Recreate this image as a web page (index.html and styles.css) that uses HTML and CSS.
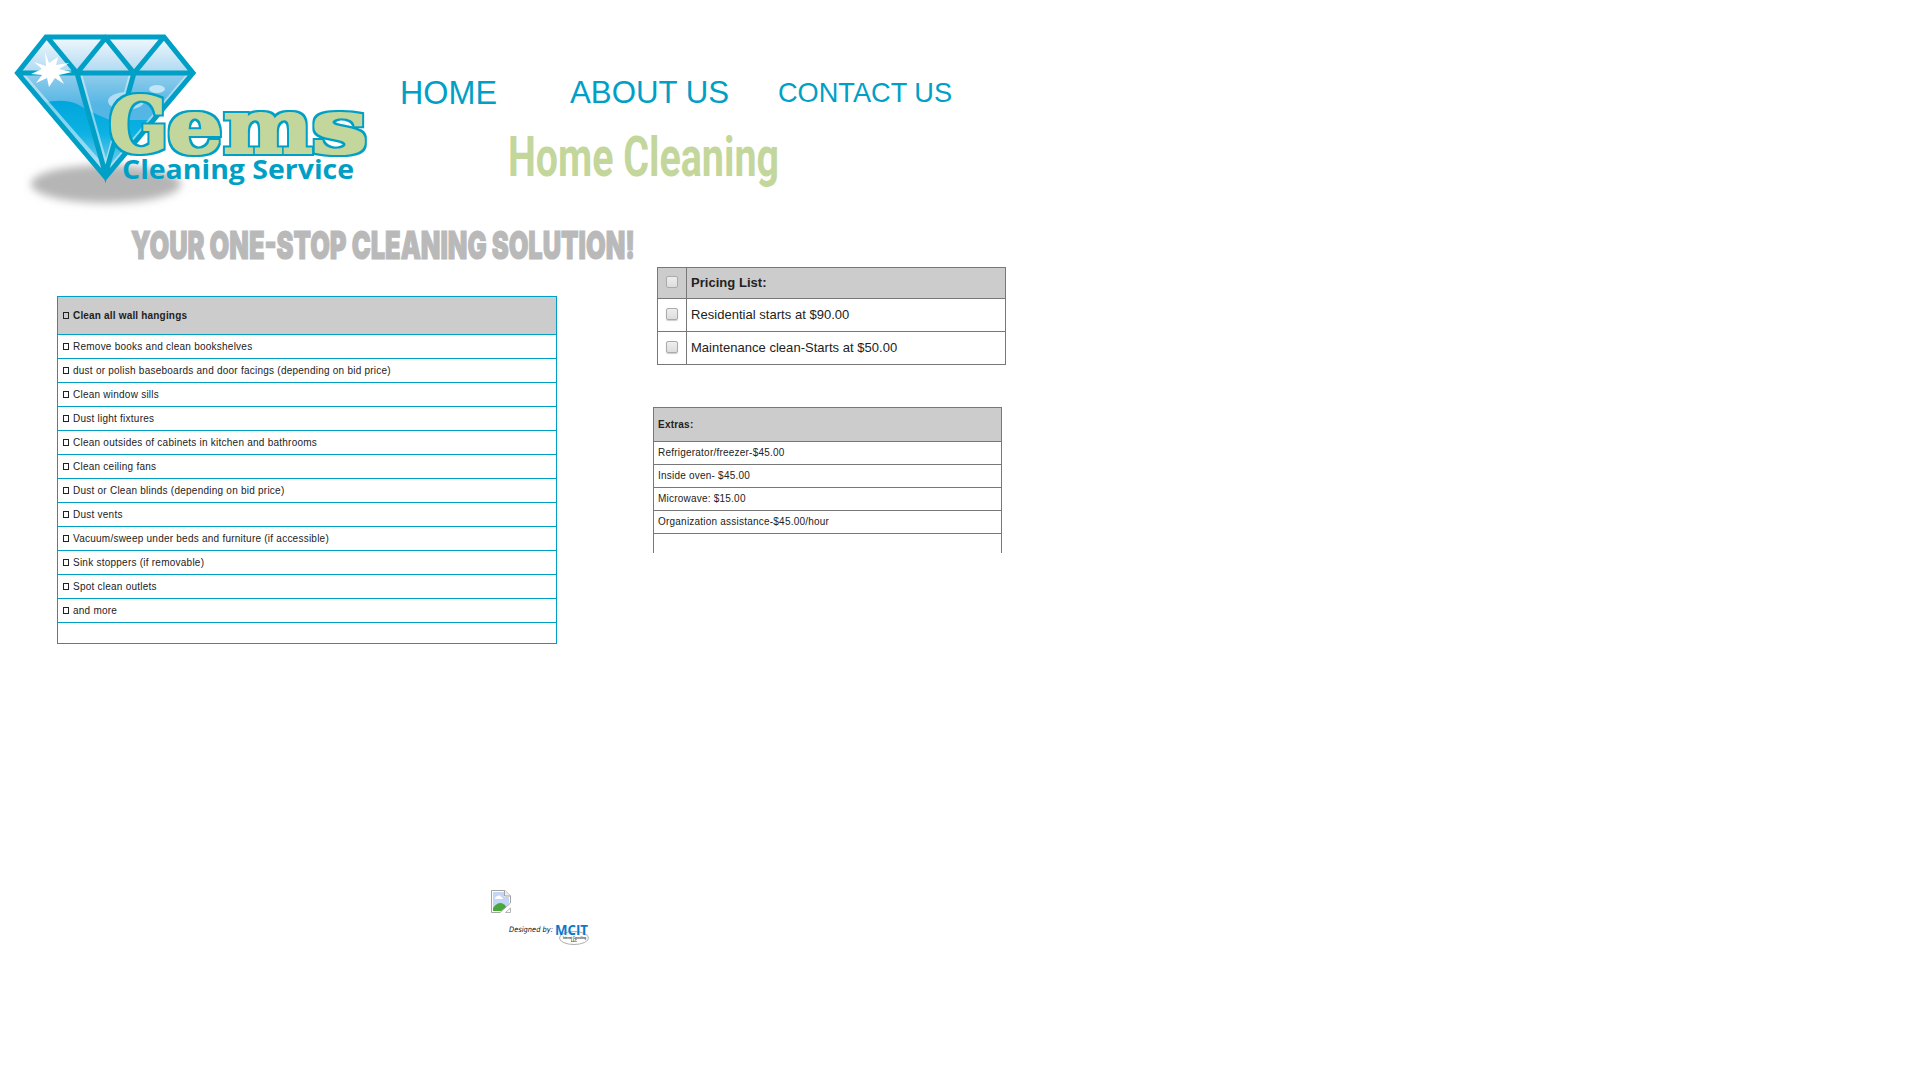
FILE: index.html
```html
<!DOCTYPE html>
<html lang="en">
<head>
<meta charset="utf-8">
<title>Gems Cleaning Service - Home Cleaning</title>
<link rel="stylesheet" href="styles.css">
</head>
<body>
<header class="header">
  <svg class="logo" width="380" height="215" viewBox="0 0 380 215" role="img" aria-label="Gems Cleaning Service">
    <defs>
      <linearGradient id="crown" x1="0" y1="0" x2="0" y2="1"><stop offset="0" stop-color="#f2f8fd"/><stop offset="1" stop-color="#aed9f1"/></linearGradient>
      <linearGradient id="body" gradientUnits="userSpaceOnUse" x1="0" y1="73" x2="0" y2="105"><stop offset="0" stop-color="#92cdec"/><stop offset="1" stop-color="#54b6e4"/></linearGradient>
      <linearGradient id="water" gradientUnits="userSpaceOnUse" x1="0" y1="100" x2="0" y2="176"><stop offset="0" stop-color="#00a5dc"/><stop offset=".45" stop-color="#0db2e3"/><stop offset="1" stop-color="#9bd2ee"/></linearGradient>
      <filter id="soft" x="-20%" y="-50%" width="140%" height="200%"><feGaussianBlur stdDeviation="4"/></filter>
      <filter id="plump" x="-5%" y="-10%" width="110%" height="120%" color-interpolation-filters="sRGB">
        <feMorphology in="SourceGraphic" operator="dilate" radius="1" result="fat"/>
        <feMorphology in="SourceAlpha" operator="dilate" radius="3" result="edge"/>
        <feFlood flood-color="#00a0c6"/>
        <feComposite in2="edge" operator="in" result="rim"/>
        <feMerge><feMergeNode in="rim"/><feMergeNode in="fat"/></feMerge>
      </filter>
    </defs>
    <ellipse cx="106" cy="184" rx="75" ry="19" fill="#b5b5b5" filter="url(#soft)"/>
    <path d="M45 37H165L193 73H18Z" fill="url(#crown)"/>
    <path d="M18 73H193L105 176Z" fill="url(#body)"/>
    <path d="M43 103Q62 98 77 104Q92 113 110 120H151L105 176Z" fill="url(#water)"/>
    <path d="M23 76L105 170M80 76L105 164M131 76L107 164M188 76L109 170" fill="none" stroke="#d8effa" stroke-width="5" opacity=".6"/>
    <ellipse cx="126" cy="101" rx="18" ry="9" fill="#c5e5f6" opacity=".8"/>
    <ellipse cx="157" cy="89" rx="8" ry="4" fill="#d5edf9" opacity=".8"/>
    <path d="M46 37H164L193 73L105.500 177L17.500 73ZM18 73H193M48 38L77 73L105.500 38L134 73L163 38M77 73L105.500 174L134 73" fill="none" stroke="#00a0c6" stroke-width="5"/>
    <path d="M45 52L49 63L58 57L56 65L69 63L59 69L72 72L59 75L64 84L55 78L49 87L47 78L36 83L42 75L31 74L42 69L34 62L46 66Z" fill="#fff"/>
    <g class="gems" filter="url(#plump)">
      <text x="109" y="152" font-size="77" textLength="59" lengthAdjust="spacingAndGlyphs">G</text>
      <text x="167" y="153" font-size="74" textLength="56" lengthAdjust="spacingAndGlyphs">e</text>
      <text x="223" y="153" font-size="74" textLength="90" lengthAdjust="spacingAndGlyphs">m</text>
      <text x="311" y="153" font-size="74" textLength="57" lengthAdjust="spacingAndGlyphs">s</text>
    </g>
    <text class="logo-sub" x="122" y="179" textLength="232" lengthAdjust="spacingAndGlyphs">Cleaning Service</text>
  </svg>
  <div class="head-right">
    <nav class="nav">
      <svg width="98" height="40" viewBox="0 0 98 40"><text x="-2" y="25" font-size="33" textLength="97" lengthAdjust="spacingAndGlyphs">HOME</text></svg>
      <svg width="162" height="40" viewBox="0 0 162 40"><text x="2" y="24" font-size="32" textLength="159" lengthAdjust="spacingAndGlyphs">ABOUT US</text></svg>
      <svg width="178" height="40" viewBox="0 0 178 40"><text x="-1" y="23" font-size="28.500" textLength="174" lengthAdjust="spacingAndGlyphs">CONTACT US</text></svg>
    </nav>
    <svg class="title" width="280" height="60" viewBox="0 0 280 60"><text x="0" y="36" textLength="271" lengthAdjust="spacingAndGlyphs">Home Cleaning</text></svg>
  </div>
</header>
<svg class="tagline" width="510" height="40" viewBox="0 0 510 40"><text x="1" y="34" textLength="504" lengthAdjust="spacingAndGlyphs">YOUR ONE-STOP CLEANING SOLUTION!</text></svg>
<main class="main">
  <table class="tasks">
    <tr><th><i class="box"></i>Clean all wall hangings</th></tr>
    <tr><td><i class="box"></i>Remove books and clean bookshelves</td></tr>
    <tr><td><i class="box"></i>dust or polish baseboards and door facings (depending on bid price)</td></tr>
    <tr><td><i class="box"></i>Clean window sills</td></tr>
    <tr><td><i class="box"></i>Dust light fixtures</td></tr>
    <tr><td><i class="box"></i>Clean outsides of cabinets in kitchen and bathrooms</td></tr>
    <tr><td><i class="box"></i>Clean ceiling fans</td></tr>
    <tr><td><i class="box"></i>Dust or Clean blinds (depending on bid price)</td></tr>
    <tr><td><i class="box"></i>Dust vents</td></tr>
    <tr><td><i class="box"></i>Vacuum/sweep under beds and furniture (if accessible)</td></tr>
    <tr><td><i class="box"></i>Sink stoppers (if removable)</td></tr>
    <tr><td><i class="box"></i>Spot clean outlets</td></tr>
    <tr><td><i class="box"></i>and more</td></tr>
    <tr class="blank"><td></td></tr>
  </table>
  <div class="prices">
    <table class="pricing">
      <tr><th class="tick"><i class="check"></i></th><th>Pricing List:</th></tr>
      <tr><td class="tick"><i class="check"></i></td><td>Residential starts at $90.00</td></tr>
      <tr><td class="tick"><i class="check"></i></td><td>Maintenance clean-Starts at $50.00</td></tr>
    </table>
    <table class="extras">
      <tr><th>Extras:</th></tr>
      <tr><td>Refrigerator/freezer-$45.00</td></tr>
      <tr><td>Inside oven- $45.00</td></tr>
      <tr><td>Microwave: $15.00</td></tr>
      <tr><td>Organization assistance-$45.00/hour</td></tr>
      <tr class="blank"><td></td></tr>
    </table>
  </div>
</main>
<footer class="footer">
  <svg width="20" height="23" viewBox="0 0 20 23">
    <path d="M.5.5H14L19.500 6V13L9 22.500H.5Z" fill="#fff" stroke="#a3a3a3"/>
    <path d="M2 2H13V7H18V14L10 21H2Z" fill="#c3d6f6"/>
    <path d="M4 9Q4 6 7 6Q9 4 10 7Q12 7 12 9Z" fill="#fff"/>
    <path d="M2 21V18Q8 10 14 15L15 17L10 21Z" fill="#49a83a"/>
    <path d="M13.500.5V6H19.500" fill="#eee" stroke="#a3a3a3"/>
    <path d="M14.500 22.500H19.500V18Z" fill="#fff" stroke="#a3a3a3" stroke-width=".8"/>
  </svg>
  <div class="credit">
    <svg width="46" height="16" viewBox="0 0 46 16"><text class="by" x="0" y="8" textLength="44" lengthAdjust="spacingAndGlyphs">Designed by:</text></svg>
    <svg width="38" height="24" viewBox="0 0 38 24">
      <ellipse cx="19" cy="14" rx="14.500" ry="6.500" fill="#fff" stroke="#999" stroke-width=".8"/>
      <text class="mcit" x="0" y="11" textLength="33" lengthAdjust="spacingAndGlyphs">MCIT</text>
      <text class="tiny" x="8" y="14.500" textLength="23" lengthAdjust="spacingAndGlyphs">Internet Consulting</text>
      <text class="tiny" x="16" y="18" textLength="6" lengthAdjust="spacingAndGlyphs">LLC</text>
    </svg>
  </div>
</footer>
</body>
</html>
```
FILE: styles.css
```css
body { margin: 0; background: #fff; color: #222; font-family: "Liberation Sans", Arial, sans-serif; }
svg { display: block; flex: none; }
.header { display: flex; height: 225px; }
.gems { font-family: "DejaVu Serif", serif; font-weight: bold; fill: #c3d69b; }
.logo-sub { font: bold 27px "Open Sans", sans-serif; fill: #00a0c6; }
.head-right { padding: 79px 0 0 22px; }
.nav { display: flex; gap: 49px; height: 61px; fill: #00a0c6; }
.nav svg:nth-child(2) { margin-left: 19px; }
.nav svg, .title { overflow: visible; }
.title { margin-left: 106px; }
.title text { font: 700 56px Roboto, sans-serif; fill: #c3d69b; }
.tagline { margin-left: 130px; overflow: visible; }
.tagline text { font: 900 38.500px Inter, sans-serif; fill: #b9b9b9; stroke: #b9b9b9; stroke-width: 1.200; }
.main { display: flex; align-items: flex-start; gap: 96px; height: 623px; margin: 2px 0 0 57px; }
table { border-collapse: collapse; table-layout: fixed; }
th, td { box-sizing: border-box; padding: 0 4px 1px; text-align: left; white-space: nowrap; }
th { background: #ccc; }
.tasks { width: 500px; margin-top: 29px; font-size: 10px; letter-spacing: .24px; }
.tasks th, .tasks td { border: 1px solid #00a0c6; height: 24px; padding-left: 5px; }
.tasks th { height: 38px; letter-spacing: .18px; }
.tasks .blank td { height: 21px; }
.box { display: inline-block; width: 6px; height: 7px; box-sizing: border-box; border: 1px solid #222; margin-right: 4px; }
.prices { width: 353px; }
.pricing { width: 349px; margin-left: 4px; font-size: 13px; letter-spacing: .03px; }
.pricing th, .pricing td { border: 1px solid #777; height: 33px; padding-bottom: 2px; }
.pricing th { height: 31px; }
.pricing .tick { width: 29px; padding: 0 0 2px 8px; }
.check { display: block; box-sizing: border-box; width: 12px; height: 12px; border: 1px solid #aaa; border-radius: 2px; background: linear-gradient(#eee, #ddd); box-shadow: 0 1px 1px #ccc; }
.extras { width: 349px; margin-top: 42px; font-size: 10px; letter-spacing: .22px; }
.extras th, .extras td { border: 1px solid #777; height: 23px; }
.extras th { height: 34px; }
.extras .blank td { height: 19px; border-bottom: 0; }
.footer { padding-left: 491px; }
.credit { display: flex; align-items: flex-start; margin: 11px 0 0 18px; }
.credit svg { overflow: visible; }
.by { font: italic 7.500px "DejaVu Sans", sans-serif; fill: #111; }
.mcit { font: bold 15px "Open Sans", sans-serif; fill: #0b79cb; }
.tiny { font: bold 4px "Liberation Sans", sans-serif; fill: #222; }
```
